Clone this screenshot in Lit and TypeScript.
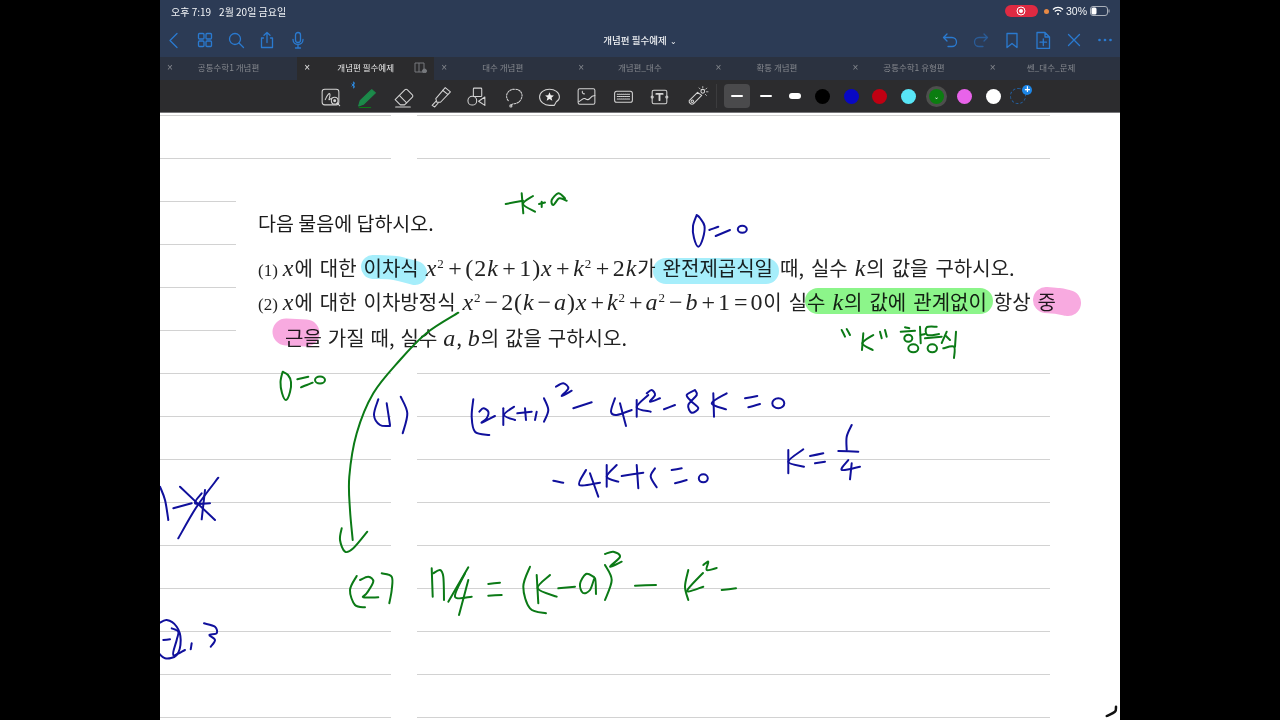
import { LitElement, html, svg, css } from "lit";
import { customElement } from "lit/decorators.js";

// flat x,y lists in screenshot coordinates, drawn as one smooth pen stroke
const smooth = (p: number[]): string => {
  const pts: [number, number][] = [];
  for (let i = 0; i < p.length; i += 2) pts.push([p[i], p[i + 1]]);
  let d = `M${pts[0][0]} ${pts[0][1]}`;
  for (let i = 0; i < pts.length - 1; i++) {
    const a = pts[Math.max(i - 1, 0)];
    const b = pts[i];
    const c = pts[i + 1];
    const e = pts[Math.min(i + 2, pts.length - 1)];
    const c1x = b[0] + (c[0] - a[0]) / 6;
    const c1y = b[1] + (c[1] - a[1]) / 6;
    const c2x = c[0] - (e[0] - b[0]) / 6;
    const c2y = c[1] - (e[1] - b[1]) / 6;
    d += `C${c1x.toFixed(1)} ${c1y.toFixed(1)} ${c2x.toFixed(1)} ${c2y.toFixed(1)} ${c[0]} ${c[1]}`;
  }
  return d;
};

const GREEN_INK = [
  // -k+a
  [505.7, 204, 523, 200.7],
  [521.7, 193.3, 523.3, 213.3],
  [533, 196, 523, 204, 535, 211.7],
  [541.7, 201.7, 541.7, 207],
  [539, 204, 545, 202.5],
  [565, 198.3, 558.3, 193.3, 551.7, 200, 553.3, 205, 559.3, 198.3, 566.7, 200.7],
  // D=0 left
  [282.7, 371.7, 280.5, 382, 282, 393, 286, 400, 290, 392, 291, 382, 288, 375, 282.7, 371.7],
  [297.3, 379.3, 308.3, 376.7],
  [301, 387.3, 312.7, 382.7],
  // arrow
  [458.3, 312.7, 426.7, 333, 400, 360, 373.3, 393.3, 356.7, 433.3, 349.3, 476.7, 350, 510, 352.7, 540],
  [341.7, 528.3, 340, 540, 345, 551.7, 353.3, 548.3, 367.3, 531.7],
  // (2)
  [356.7, 576, 350, 590, 355, 605, 365, 607.3],
  [360, 580, 368.3, 576.7, 373.3, 581.7, 366.7, 593.3, 363.3, 597.3, 378.3, 597.3],
  [381.7, 573.3, 391.7, 576.7, 391.7, 590, 389.3, 603.3],
  // D/4
  [431.7, 568.3, 432.7, 596.7],
  [433.3, 573.3, 440, 570, 443.3, 576.7, 444, 600],
  [468.3, 567.3, 448.3, 601.7],
  [465, 573.3, 455, 596.7, 471.7, 596.7],
  [468.3, 580, 459, 615],
  [488.3, 584, 500, 582.7],
  [488.3, 595.7, 501.7, 595],
  // (k-a)^2
  [530, 566.7, 523.3, 586.7, 530, 608.3, 546, 613.3],
  [536.7, 575, 538.3, 603.3],
  [550, 575, 537.7, 588.3, 556.7, 596.7],
  [558.3, 588.3, 575, 586.7],
  [594, 577, 586, 574, 580, 584, 583, 593, 590, 590, 595, 578, 596, 594],
  [605, 565, 611.7, 580, 605, 600],
  [605, 554, 613.3, 551.7, 620, 556.7, 610, 566.7, 621.7, 561.7],
  [635, 585.7, 656, 585],
  [688.3, 570, 685, 586.7, 688.3, 600],
  [703, 573, 687, 591, 703.3, 586.7],
  [703.3, 565, 708.3, 561.7, 706.7, 570, 716.7, 568],
  [721.7, 590, 736, 588.3],
  // "k"
  [841.7, 330, 845, 336.7],
  [846.7, 329, 850, 335],
  [863.3, 333.3, 862, 350],
  [873.3, 335, 862.3, 343.3, 872.7, 350],
  [880, 331.7, 881.7, 338.3],
  [885, 330, 886.7, 336.7],
  // handwritten note
  [905, 327.3, 909.3, 328.3],
  [900.7, 331.7, 915, 330.7],
  [920, 326.7, 920.7, 343.3],
  [920.7, 335, 925, 334],
  [936.7, 326.7, 926.7, 327.3, 927.3, 335, 939, 334],
  [925, 338.3, 941.7, 336.7],
  [946.7, 331.7, 941.7, 343],
  [946, 336, 950, 340],
  [956, 331.7, 955, 346.7],
  [943.3, 348.3, 954, 346.7, 954, 358],
];

const GREEN_RINGS = [
  [320, 380, 5, 3.5],
  [908.3, 338.3, 4, 3.5],
  [913.3, 348.3, 5, 4],
  [932.3, 348.3, 4.7, 4],
];

const NAVY_INK = [
  // D=0 top
  [696.7, 215, 693, 226, 694, 238, 698.3, 246.7, 703, 238, 704.5, 226, 700, 218, 696.7, 215],
  [709.3, 230, 718.3, 226.7],
  [715.7, 236, 730, 230],
  // (1)
  [378.3, 399.3, 374, 415, 380, 425, 390, 426],
  [386.7, 403.3, 390, 425],
  [400.7, 396.7, 407.3, 413.3, 402.7, 433.3],
  // (2k+1)^2
  [473.3, 399.3, 471.7, 416.7, 475, 431.7, 489.3, 435],
  [479.3, 411.7, 483.3, 408.3, 488.3, 411.7, 486.7, 418.3, 481.7, 422.7, 495, 416],
  [503.3, 408.3, 503.3, 425],
  [514, 406.7, 504, 415, 515, 420],
  [517.3, 413.3, 531.7, 411.7],
  [525, 408.3, 526, 420],
  [536.7, 411.7, 535, 420],
  [544, 398.3, 548.3, 410, 544, 421.7],
  [556, 386.7, 563.3, 383.3, 568.3, 388.3, 561.7, 396, 571.7, 390.7],
  [573.3, 408.3, 591.7, 402.3],
  [615, 398.3, 611, 411.7, 616.7, 415, 631.7, 410],
  [620, 403.3, 626, 426],
  [636.7, 400, 636.7, 416.7],
  [648.3, 395, 636.7, 407.3, 650.7, 411.7],
  [646.7, 393.3, 651.7, 390, 655, 395, 650, 401.7, 660, 398.3],
  [664, 409.3, 675, 405],
  [695, 390, 686.7, 395, 691.7, 401.7, 698.3, 408.3, 691.7, 412.7, 688.3, 405, 696.7, 395, 695, 390],
  [713.3, 393.3, 714, 416.7],
  [726.7, 393.3, 711.7, 403.3, 726, 409.3],
  [745, 398.3, 757.3, 396],
  [748.3, 407.3, 760, 404],
  // -4k+1=0
  [553.3, 480.7, 563.3, 482.7],
  [586, 470, 579.3, 485, 600, 482.7],
  [590, 473.3, 598.3, 496.7],
  [606.7, 465, 606.7, 486.7],
  [616.7, 465, 606.7, 476.7, 618.3, 481.7],
  [621.7, 476, 643.3, 472.7],
  [636.7, 465, 638.3, 488.3],
  [655, 468.3, 650.7, 476.7, 656.7, 487.3],
  [671.7, 470, 681.7, 468.3],
  [675, 483.3, 686.7, 480],
  // k=1/4
  [788.3, 450, 788.3, 473.3],
  [803.3, 449.3, 788.3, 461.7, 804, 466.7],
  [810, 456, 823.3, 453.3],
  [815, 463.3, 825, 461.7],
  [851.7, 425, 846.7, 436.7, 846.7, 450],
  [838.3, 451, 858.3, 451.7],
  [848.3, 460, 841.7, 470, 860, 466.7],
  [851.7, 463.3, 850, 479.3],
  // left margin scribbles
  [160, 486.7, 165, 500, 168.3, 520],
  [173.3, 508.3, 191.7, 503.3],
  [180, 486.7, 215, 520],
  [218.3, 477.7, 196.7, 506.7, 178.3, 538.3],
  [201.7, 493.3, 195, 503.3, 210, 503.3],
  [205, 490, 201.7, 519.3],
  [158, 624, 166.7, 620, 176.7, 626.7, 180.7, 640, 176.7, 655, 165, 658.3, 156, 650],
  [163.3, 640, 170, 639.3],
  [171.7, 628.3, 178.3, 631.7, 176.7, 640, 173.3, 655, 185, 650],
  [191.7, 643.3, 190.7, 649.3],
  [204, 623.3, 215, 626.7, 216.7, 633.3, 209.3, 635, 215, 640, 210.7, 646.7],
];

const NAVY_RINGS = [
  [742.3, 229.3, 4.5, 3.5],
  [778.3, 403.3, 6, 5],
  [703.3, 478.3, 4.5, 4],
];

const MARKS = [
  { color: "#a6eefb", w: 24, pts: [373, 267, 395, 268, 415, 273] },
  { color: "#a6eefb", w: 26, pts: [666, 271, 766, 271] },
  { color: "#8cf58a", w: 26, pts: [818, 301, 980, 301] },
  { color: "#f8aae0", w: 26, pts: [1046, 300, 1058, 301, 1068, 303] },
  { color: "#f8aae0", w: 27, pts: [286, 332, 306, 333] },
];

const TABS = ["공통수학1 개념편", "개념편 필수예제", "대수 개념편", "개념편_대수", "확통 개념편", "공통수학1 유형편", "쎈_대수_문제"];

const TOOLS = [
  svg`<rect x="3" y="4" width="16" height="15" rx="2.5"/><path d="M6 14c2-5 4-7 4.500-5s-2 6-.5 5 2-2 3-1"/><circle cx="15" cy="15" r="3.200" fill="#2c2c2e"/><circle cx="15" cy="15" r=".9" fill="#ddd"/><path d="M17.300 17.300l2.500 2.500"/>`,
  svg`<path d="M-3 -1l3 2.500-1.500 1.500v-6L0 -1.500l-3 2.500" stroke="#2d8fe8" stroke-width=".8"/><path d="M3.500 20l1.500-5L16 4.500l3.500 3L8 18.500z" fill="#1c8a4a" stroke="#1c8a4a"/><path d="M4 21.500h11" stroke="#0c7a16"/>`,
  svg`<path d="M3 14 12.500 4.500q1-1 2 0l5 5q1 1 0 2L12 19H8z"/><path d="M7 10l7 7"/><path d="M3.500 21h14"/>`,
  svg`<path d="M15.500 2.500l5 4-9.500 10H7.500L6.500 13z"/><path d="M13 5l5 4"/><path d="M6.800 15.500 3 19.500l2.500 1.500 3.500-4"/>`,
  svg`<rect x="8" y="3" width="8" height="8" rx=".8"/><circle cx="7" cy="15" r="4.200"/><path d="M19 11.500v8l-6-4z"/>`,
  svg`<path stroke-dasharray="1.600 1.200" d="M6 15C2 10 6 4 12 4s9 5 6 10-7 3-9 5"/><circle cx="8.500" cy="20" r="1"/>`,
  svg`<path d="M11 4c5 0 9.500 3 9.500 7.500 0 2-1 3.500-3 4.500l-2 3.500H11C6 19.500 1.500 16 1.500 11.500S6 4 11 4z"/><path d="M11 7l1.200 2.900 3 .2-2.300 2 .8 3-2.700-1.700L8.300 15l.8-3-2.300-2 3-.2z" fill="#eee" stroke="none"/>`,
  svg`<rect x="3" y="3.500" width="16" height="15" rx="1.500"/><path d="M3.500 16c3-1 4-4 6-3s3 2 4.500 0 3-3 5-3"/><path d="M7 6a2 2 0 0 0 2 2.500"/>`,
  svg`<rect x="2.500" y="6" width="17" height="10.500" rx="2"/><path stroke-dasharray="1 .8" d="M5 8.800h12M5 11h12M5 13.300h12"/>`,
  svg`<rect x="4" y="5" width="14" height="13" rx="1.500"/><circle cx="4" cy="11.500" r="1"/><circle cx="18" cy="11.500" r="1"/><path stroke-width="1.800" d="M8 8.500h6M11 8.500v6"/>`,
  svg`<path d="M4 15l8-8 4 3-8 8a2.800 2.800 0 0 1-4-3z"/><circle cx="7" cy="15.500" r="1.200"/><circle cx="17" cy="6" r="1.800"/><path stroke-width=".8" d="M17 1.500v1.200M20.800 3l-1 1M22 6.500h-1.500M20.500 10l-1-1M13.500 2.800l1 1"/>`,
];

const SWATCHES = ["#000000", "#0808c4", "#c00012", "#58e6f7", "#0b7d10", "#e863ea", "#ffffff"];

@customElement("app-root")
export class AppRoot extends LitElement {
  static override styles = css`
    :host {
      display: block;
      width: 1280px;
      height: 720px;
      background: #000;
      overflow: hidden;
      font-family: "Noto Sans CJK KR", "Noto Sans", sans-serif;
    }

    .device {
      width: 960px;
      height: 720px;
      margin: 0 auto;
      display: flex;
      flex-direction: column;
      background: #fff;
    }

    .status {
      height: 22px;
      background: #2c3b55;
      color: #f2f4f7;
      font-size: 10px;
      display: flex;
      align-items: center;
      padding: 0 10px 0 11px;
    }
    .status .date {
      margin-left: 8px;
    }
    .status .right {
      margin-left: auto;
      display: flex;
      align-items: center;
    }
    .rec {
      width: 33px;
      height: 12px;
      border-radius: 6px;
      background: #df2a42;
      display: flex;
      align-items: center;
      justify-content: center;
    }
    .dot {
      width: 5px;
      height: 5px;
      border-radius: 50%;
      background: #e88a45;
      margin: 0 3px 0 6px;
    }
    .pct {
      font-family: "Liberation Sans", sans-serif;
      font-size: 10.5px;
      margin: 0 3px 0 2px;
    }

    .nav {
      height: 35px;
      background: #2c3b55;
      display: flex;
      align-items: center;
      padding: 0 0 0 5px;
      position: relative;
    }
    .nav svg {
      width: 18px;
      height: 18px;
      fill: none;
      stroke: #2a7ad0;
      stroke-width: 1.300;
      stroke-linecap: round;
      stroke-linejoin: round;
      flex: none;
    }
    .nav .icon {
      width: 31px;
      display: flex;
      justify-content: center;
    }
    .nav .dim svg {
      stroke: #2a5c98;
    }
    .title {
      position: absolute;
      left: 0;
      right: 0;
      text-align: center;
      color: #eef0f3;
      font-size: 9.5px;
      font-weight: 500;
    }
    .title span {
      font-size: 8px;
      margin-left: 3px;
    }
    .spacer {
      flex: 1;
    }

    .tabs {
      height: 23px;
      background: #2b3240;
      display: flex;
    }
    .tab {
      width: 137.100px;
      display: grid;
      grid-template-columns: 20px 1fr 20px;
      align-items: center;
      font-size: 8.5px;
      line-height: 1;
      color: #85888e;
      text-align: center;
      padding-bottom: 2px;
      box-sizing: border-box;
    }
    .tab .x {
      font-family: "Liberation Sans", sans-serif;
      font-size: 10px;
    }
    .tab.on {
      background: #2b2b2d;
      color: #e6e6e6;
    }
    .tab svg {
      width: 13px;
      height: 11px;
      fill: none;
      stroke: #77797d;
      stroke-width: 1;
    }

    .toolbar {
      height: 32px;
      background: #2c2c2e;
      border-bottom: 1px solid #77777a;
      display: flex;
      align-items: center;
      padding-left: 152px;
    }
    .tool {
      width: 36.600px;
      display: flex;
      justify-content: center;
      flex: none;
    }
    .tool svg {
      width: 23px;
      height: 23px;
      fill: none;
      stroke: #d4d4d4;
      stroke-width: 1;
      stroke-linecap: round;
      stroke-linejoin: round;
      overflow: visible;
    }
    .sep {
      width: 1px;
      height: 24px;
      background: #3c3c3e;
      margin: 0 6.500px 0 1.500px;
      flex: none;
    }
    .pen {
      width: 28.400px;
      height: 24px;
      flex: none;
      display: flex;
      align-items: center;
      justify-content: center;
    }
    .pen.on {
      width: 26px;
      background: #4a4a4c;
      border-radius: 4px;
      margin-right: 2.400px;
    }
    .pen i {
      display: block;
      background: #fff;
      border-radius: 3px;
    }
    .swatch {
      width: 15px;
      height: 15px;
      border-radius: 50%;
      display: flex;
      align-items: center;
      justify-content: center;
      color: #fff;
      font-size: 6px;
    }
    .swatch.ring {
      box-shadow: 0 0 0 3px #4d4f4d;
    }
    .add {
      position: relative;
      width: 28px;
      flex: none;
      display: flex;
      justify-content: center;
    }
    .add .ghost {
      width: 14px;
      height: 14px;
      border: 1px dashed #24609f;
      border-radius: 50%;
      margin-left: -6px;
    }
    .add .plus {
      position: absolute;
      top: -3px;
      left: 15px;
      width: 10px;
      height: 10px;
      border-radius: 50%;
      background: #1d86e6;
      color: #fff;
      font: 700 10px/10px "Liberation Sans", sans-serif;
      text-align: center;
    }

    .page {
      flex: 1;
      position: relative;
      overflow: hidden;
      display: flex;
      gap: 26px;
      padding-right: 70px;
    }
    .ruled {
      background-image: linear-gradient(to bottom, #d2d2d2 1px, transparent 1px);
      background-size: 100% 43px;
      background-position: 0 2px;
    }
    .ruled.left {
      width: 231px;
    }
    .ruled.right {
      flex: 1;
    }

    .pasted {
      position: absolute;
      left: 76px;
      top: 52px;
      width: 860px;
      height: 201px;
      box-sizing: border-box;
      background: #fff;
      padding: 41px 0 0 22px;
      color: #222;
      font-size: 20px;
      word-spacing: 2.500px;
      white-space: nowrap;
    }
    .pasted div {
      height: 34px;
      line-height: 34px;
    }
    .pasted .head {
      margin-bottom: 11px;
      color: #1a1a1a;
      font-size: 19.500px;
      word-spacing: 0;
    }
    .pasted .third {
      margin-top: 2px;
      padding-left: 27px;
      word-spacing: 1.500px;
    }
    .pasted i,
    .pasted b {
      font-family: "Liberation Serif", serif;
      font-size: 24px;
      font-weight: 400;
      letter-spacing: 0.900px;
      line-height: 0;
    }
    .pasted .op {
      margin: 0 3.500px;
      letter-spacing: 0;
    }
    .pasted .long .op {
      margin: 0 3px;
    }
    .pasted .no {
      font-family: "Liberation Serif", serif;
      font-size: 17px;
      margin-right: 5px;
    }
    .pasted sup {
      font-family: "Liberation Serif", serif;
      font-size: 13px;
      line-height: 0;
      vertical-align: 8px;
      margin-right: 1px;
    }

    .ink,
    .marks {
      position: absolute;
      left: 0;
      top: 0;
      width: 960px;
      height: 607px;
      fill: none;
      stroke-linecap: round;
      stroke-linejoin: round;
    }
    .marks {
      mix-blend-mode: multiply;
    }
  `;

  renderInk() {
    const strokes = (list: number[][], color: string) =>
      list.map((p) => svg`<path d=${smooth(p)} stroke=${color} stroke-width="2"/>`);
    const rings = (list: number[][], color: string) =>
      list.map(
        (r) =>
          svg`<ellipse cx=${r[0]} cy=${r[1]} rx=${r[2]} ry=${r[3]} stroke=${color} stroke-width="2"/>`
      );
    return html`
      <svg class="marks" viewBox="160 113 960 607">
        ${MARKS.map(
          (m) => svg`<path d=${smooth(m.pts)} stroke=${m.color} stroke-width=${m.w}/>`
        )}
      </svg>
      <svg class="ink" viewBox="160 113 960 607">
        ${strokes(GREEN_INK, "#0b7a16")} ${rings(GREEN_RINGS, "#0b7a16")}
        ${strokes(NAVY_INK, "#10109c")} ${rings(NAVY_RINGS, "#10109c")}
        <path d=${smooth([1116, 706.7, 1115, 711.7, 1106.7, 716])} stroke="#111" stroke-width="2.500"/>
      </svg>
    `;
  }

  override render() {
    return html`
      <div class="device">
        <div class="status">
          <span>오후 7:19</span><span class="date">2월 20일 금요일</span>
          <div class="right">
            <div class="rec">
              <svg width="10" height="10" viewBox="0 0 10 10">
                <circle cx="5" cy="5" r="4" fill="none" stroke="#fff" stroke-width="1"/>
                <circle cx="5" cy="5" r="2" fill="#fff"/>
              </svg>
            </div>
            <div class="dot"></div>
            <svg width="12" height="10" viewBox="0 0 12 10" fill="none" stroke="#fff" stroke-width="1.300">
              <path d="M1 3.500a7 7 0 0 1 10 0M2.800 5.500a4.500 4.500 0 0 1 6.400 0"/>
              <circle cx="6" cy="8" r="1" fill="#fff" stroke="none"/>
            </svg>
            <span class="pct">30%</span>
            <svg width="20" height="10" viewBox="0 0 20 10" fill="none">
              <rect x=".5" y=".5" width="17" height="9" rx="2.500" stroke="#aab0ba"/>
              <rect x="1.500" y="1.500" width="5" height="7" rx="1.500" fill="#fff"/>
              <path d="M19 3.500v3" stroke="#aab0ba"/>
            </svg>
          </div>
        </div>

        <div class="nav">
          <div class="icon" style="width:18px"><svg viewBox="0 0 18 18"><path d="M12 2.500 5 9.500l7 7"/></svg></div>
          <div class="icon" style="margin-left:6px">
            <svg viewBox="0 0 18 18"><rect x="2.500" y="2.500" width="5.500" height="5.500" rx="1"/><rect x="10" y="2.500" width="5.500" height="5.500" rx="1"/><rect x="2.500" y="10" width="5.500" height="5.500" rx="1"/><rect x="10" y="10" width="5.500" height="5.500" rx="1"/></svg>
          </div>
          <div class="icon"><svg viewBox="0 0 18 18"><circle cx="8" cy="8" r="5.500"/><path d="M12 12l4.500 4.500"/></svg></div>
          <div class="icon"><svg viewBox="0 0 18 18"><path d="M5.500 7H3.500v9.500h11V7h-2M9 11.500V1.500M6 4.200 9 1.500l3 2.700"/></svg></div>
          <div class="icon"><svg viewBox="0 0 18 18"><rect x="6.500" y="1.500" width="5" height="10" rx="2.500"/><path d="M4 8.500c0 6.500 10 6.500 10 0M9 14v3M6.500 17h5"/></svg></div>
          <div class="title">개념편 필수예제<span>⌄</span></div>
          <div class="spacer"></div>
          <div class="icon"><svg viewBox="0 0 18 18"><path d="M6 3 2.500 6.500 6 10M3 6.500h8a4.500 4.500 0 0 1 0 9H7"/></svg></div>
          <div class="icon dim"><svg viewBox="0 0 18 18"><path d="M12 3l3.500 3.500L12 10M15 6.500H7a4.500 4.500 0 0 0 0 9h4"/></svg></div>
          <div class="icon"><svg viewBox="0 0 18 18"><path d="M4 2.500h10v14l-5-4-5 4z"/></svg></div>
          <div class="icon"><svg viewBox="0 0 18 18"><path d="M3 1.500h8l4.500 4.500v11.500H3zM11 1.500V6h4.500M9.300 8v6.500M6 11.200h6.500"/></svg></div>
          <div class="icon"><svg viewBox="0 0 18 18"><path d="M3.500 3.500l11 11M14.500 3.500l-11 11"/></svg></div>
          <div class="icon">
            <svg viewBox="0 0 18 18"><circle cx="3.500" cy="9" r=".7"/><circle cx="9" cy="9" r=".7"/><circle cx="14.500" cy="9" r=".7"/></svg>
          </div>
        </div>

        <div class="tabs">
          ${TABS.map(
            (t, i) => html`
              <div class="tab ${i === 1 ? "on" : ""}">
                <span class="x">×</span>
                <span>${t}</span>
                ${i === 1
                  ? html`<svg viewBox="0 0 13 11"><path d="M1 1h9v9H1zM5 1v9"/><circle cx="10.500" cy="9" r="2" fill="#77797d"/></svg>`
                  : html`<span></span>`}
              </div>
            `
          )}
        </div>

        <div class="toolbar">
          ${TOOLS.map((t) => html`<div class="tool"><svg viewBox="0 0 22 22">${t}</svg></div>`)}
          <div class="sep"></div>
          <div class="pen on"><i style="width:12px;height:1.500px"></i></div>
          <div class="pen"><i style="width:12px;height:1.500px"></i></div>
          <div class="pen"><i style="width:12px;height:6px"></i></div>
          ${SWATCHES.map(
            (c) => html`
              <div class="pen">
                <div class="swatch ${c === "#0b7d10" ? "ring" : ""}" style="background:${c}">
                  ${c === "#0b7d10" ? "⌄" : ""}
                </div>
              </div>
            `
          )}
          <div class="add"><div class="ghost"></div><div class="plus">+</div></div>
        </div>

        <div class="page">
          <div class="ruled left"></div>
          <div class="ruled right"></div>
          <div class="pasted">
            <div class="head">다음 물음에 답하시오.</div>
            <div>
              <span class="no">(1)</span><i>x</i>에 대한 이차식 <i>x</i><sup>2</sup><b class="op">+</b><b>(2</b><i>k</i><b class="op">+</b><b>1)</b><i>x</i><b class="op">+</b><i>k</i><sup>2</sup><b class="op">+</b><b>2</b><i>k</i>가 완전제곱식일 때, 실수 <i>k</i>의 값을 구하시오.
            </div>
            <div class="long">
              <span class="no">(2)</span><i>x</i>에 대한 이차방정식 <i>x</i><sup>2</sup><b class="op">−</b><b>2(</b><i>k</i><b class="op">−</b><i>a</i><b>)</b><i>x</i><b class="op">+</b><i>k</i><sup>2</sup><b class="op">+</b><i>a</i><sup>2</sup><b class="op">−</b><i>b</i><b class="op">+</b><b>1</b><b class="op">=</b><b>0</b>이 실수 <i>k</i>의 값에 관계없이 항상 중
            </div>
            <div class="third">근을 가질 때, 실수 <i>a</i>, <i>b</i>의 값을 구하시오.</div>
          </div>
          ${this.renderInk()}
        </div>
      </div>
    `;
  }
}
